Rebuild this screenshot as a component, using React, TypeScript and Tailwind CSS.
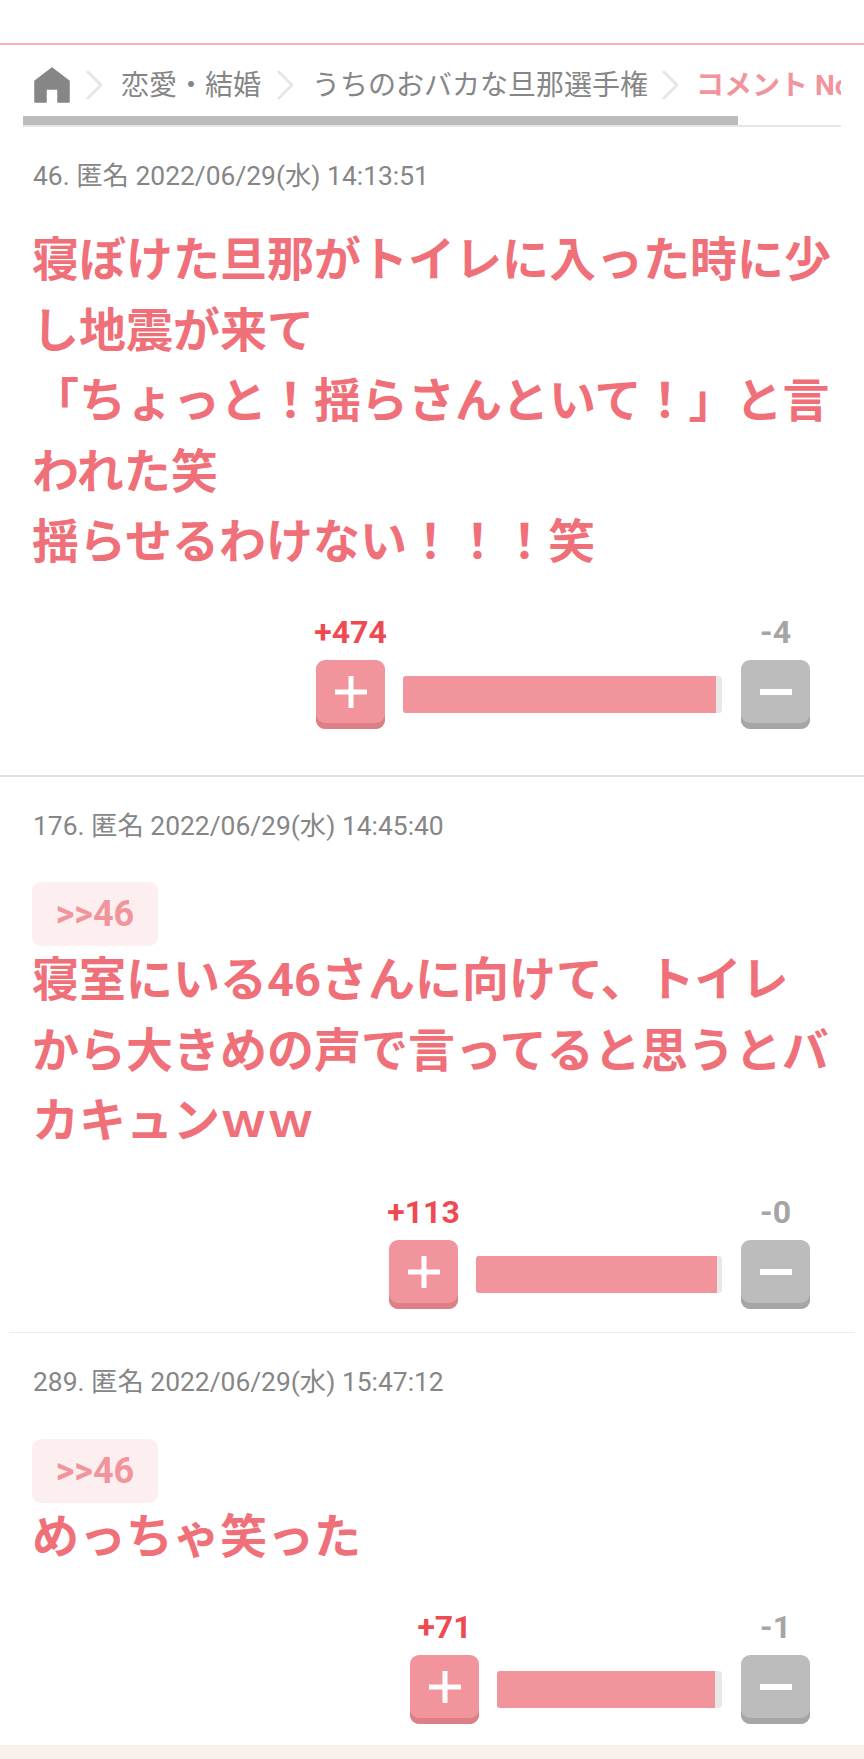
import React from 'react'

const font = "font-['Roboto','Noto_Sans_CJK_JP',sans-serif]"

function Chevron() {
  return (
    <svg width="18" height="30" viewBox="0 0 18 30" fill="none" className="shrink-0">
      <path d="M2 2l13 13L2 28" stroke="#e6e6e6" strokeWidth="3" strokeLinecap="round" strokeLinejoin="round" />
    </svg>
  )
}

function Vote({ plus, minus, barWidth, fill }: { plus: string; minus: string; barWidth: string; fill: string }) {
  return (
    <div className="flex justify-end pr-[54px]">
      <div className="flex flex-col">
        <div className="flex justify-between text-[32px] leading-[36px] font-bold">
          <span className="flex w-[69px] justify-center whitespace-nowrap text-[#ee4a52]">{plus}</span>
          <span className="flex w-[69px] justify-center text-[#a5a5a5]">{minus}</span>
        </div>
        <div className="mt-[10px] flex items-start">
          <button className="flex h-[69px] w-[69px] items-center justify-center rounded-[9px] bg-[#f1949c] shadow-[inset_0_-6px_0_#dc7f87]">
            <svg width="32" height="32" viewBox="0 0 32 32" className="mb-[5px]">
              <path d="M13.5 0h5v13.5H32v5H18.5V32h-5V18.5H0v-5h13.5z" fill="#fff" />
            </svg>
          </button>
          <div className={`mt-[16px] mr-[19px] ml-[18px] flex h-[37px] overflow-hidden rounded-[3px] bg-[#e8e8e8] ${barWidth}`}>
            <div className={`h-full bg-[#f1949c] ${fill}`} />
          </div>
          <button className="flex h-[69px] w-[69px] items-center justify-center rounded-[9px] bg-[#bcbcbc] shadow-[inset_0_-6px_0_#a6a6a6]">
            <svg width="32" height="6" viewBox="0 0 32 6" className="mb-[5px]">
              <rect width="32" height="6" fill="#fff" />
            </svg>
          </button>
        </div>
      </div>
    </div>
  )
}

function Anchor() {
  return (
    <div className="-mb-[1px] flex h-[64px] w-[126px] items-center justify-center rounded-[9px] bg-[#fdeff0] text-[36px] font-bold text-[#f1949c]">
      &gt;&gt;46
    </div>
  )
}

export default function App() {
  return (
    <div className={`flex h-[1759px] flex-col bg-white ${font}`}>
      <div className="h-[45px] border-b-2 border-[#f5b5ba]" />

      <nav className="mx-[23px] mt-[18px] h-[64px] overflow-hidden border-b-2 border-[#e6e6e6]">
        <div className="flex h-[53px] items-start gap-[16px] whitespace-nowrap text-[28px] leading-[46px] text-[#868686]">
          <svg width="36" height="36" viewBox="0 0 36 36" className="mt-[4px] ml-[11px] shrink-0">
            <path d="M18 1L35 14V35H24V22H12V35H1V14z" fill="#868686" stroke="#868686" strokeWidth="1.5" strokeLinejoin="round" />
          </svg>
          <span className="mt-[7px]"><Chevron /></span>
          <span className="ml-[1px]">恋愛・結婚</span>
          <span className="mt-[7px]"><Chevron /></span>
          <span className="ml-[1px]">うちのおバカな旦那選手権</span>
          <span className="mt-[7px] -ml-[2px]"><Chevron /></span>
          <span className="font-bold text-[#f1949c]">コメント No</span>
        </div>
        <div className="h-[9px] w-[715px] bg-[#bcbcbc]" />
      </nav>

      <section className="h-[650px] border-b-2 border-[#e2e2e2]">
        <div className="px-[33px] pt-[31px] text-[26.4px] leading-[36px] text-[#868686]">46. 匿名 2022/06/29(水) 14:13:51</div>
        <p className="mt-[31px] pl-[32px] pr-[30px] text-[47px] font-bold leading-[70.5px] text-[#f0707a]">
          寝ぼけた旦那がトイレに入った時に少し地震が来て<br />
          「ちょっと！揺らさんといて！」と言われた笑<br />
          揺らせるわけない！！！笑
        </p>
        <div className="mt-[36px]">
          <Vote plus="+474" minus="-4" barWidth="w-[319px]" fill="w-[98%]" />
        </div>
      </section>

      <section className="mx-[9px] h-[556px] border-b border-[#ececec]">
        <div className="px-[24px] pt-[31px] text-[26.4px] leading-[36px] text-[#868686]">176. 匿名 2022/06/29(水) 14:45:40</div>
        <div className="mt-[38px] pl-[23px] pr-[21px]">
          <Anchor />
          <p className="text-[47px] font-bold leading-[70.5px] text-[#f0707a]">
            寝室にいる46さんに向けて、トイレから大きめの声で言ってると思うとバカキュンｗｗ
          </p>
        </div>
        <div className="mt-[37px] -mr-[9px]">
          <Vote plus="+113" minus="-0" barWidth="w-[246px]" fill="w-[98%]" />
        </div>
      </section>

      <section className="flex-1">
        <div className="px-[33px] pt-[31px] text-[26.4px] leading-[36px] text-[#868686]">289. 匿名 2022/06/29(水) 15:47:12</div>
        <div className="mt-[39px] pl-[32px] pr-[33px]">
          <Anchor />
          <p className="text-[47px] font-bold leading-[70.5px] text-[#f0707a]">めっちゃ笑った</p>
        </div>
        <div className="mt-[36px]">
          <Vote plus="+71" minus="-1" barWidth="w-[225px]" fill="w-[97%]" />
        </div>
      </section>

      <div className="h-[14px] bg-[#fbf1ec]" />
    </div>
  )
}
